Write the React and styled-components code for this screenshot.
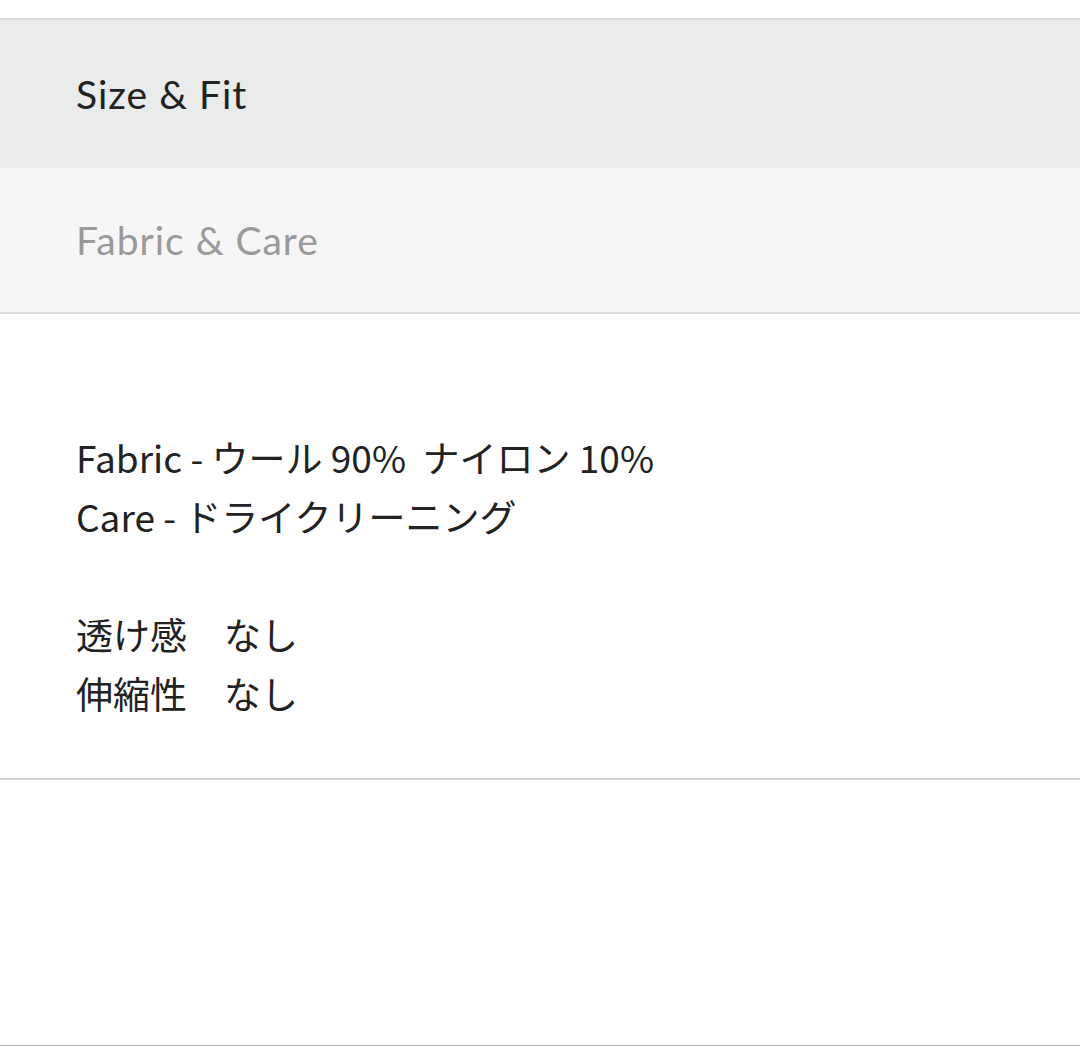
import React from 'react';
import styled, { createGlobalStyle } from 'styled-components';

const GlobalStyle = createGlobalStyle`
  html, body {
    margin: 0;
    padding: 0;
    background: #ffffff;
  }
`;

const Page = styled.div`
  width: 1080px;
  height: 1047px;
  background: #ffffff;
  padding-top: 18px;
  box-sizing: border-box;
  display: flex;
  flex-direction: column;
`;

const Tab = styled.div`
  height: ${(p) => p.height}px;
  flex-shrink: 0;
  display: flex;
  align-items: center;
  padding-left: 76px;
  background: ${(p) => (p.active ? '#e9ecea' : '#f6f6f6')};
  border-top: ${(p) => (p.first ? '2px solid #dcdcdc' : 'none')};
  border-bottom: ${(p) => (p.last ? '2px solid #dcdcdc' : 'none')};
  font-family: 'Lato', 'Noto Sans', sans-serif;
  font-weight: 400;
  font-size: 39px;
  letter-spacing: 1px;
  color: ${(p) => (p.active ? '#222222' : '#9a9a9a')};
`;

const Content = styled.div`
  flex-shrink: 0;
  padding: 114px 76px 55px;
  border-bottom: 2px solid #d4d4d4;
  font-family: 'Noto Sans CJK JP', 'Noto Sans', sans-serif;
  font-size: 37px;
  line-height: 59px;
  color: #222222;
`;

const Line = styled.div`
  white-space: pre;
  height: 59px;
`;

const Spacer = styled.div`
  flex: 1;
`;

const BottomRule = styled.div`
  height: 1px;
  background: #b8b8b8;
  margin-bottom: 1px;
`;

const lines = [
  'Fabric - ウール 90%  ナイロン 10%',
  'Care - ドライクリーニング',
  '',
  '透け感　なし',
  '伸縮性　なし',
];

export default function App() {
  return (
    <>
      <GlobalStyle />
      <Page>
        <Tab active first height={148}>Size &amp; Fit</Tab>
        <Tab last height={144}>Fabric &amp; Care</Tab>
        <Content>
          {lines.map((l, i) => (
            <Line key={i}>{l}</Line>
          ))}
        </Content>
        <Spacer />
        <BottomRule />
      </Page>
    </>
  );
}
